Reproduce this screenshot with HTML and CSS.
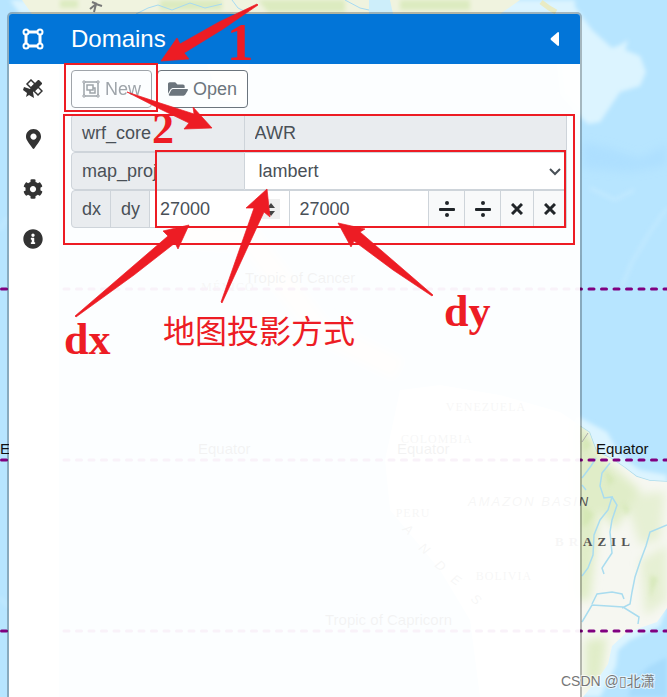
FILE: index.html
```html
<!DOCTYPE html>
<html lang="en">
<head>
<meta charset="utf-8">
<title>Domains</title>
<link rel="stylesheet" href="styles.css">
</head>
<body>
<svg class="map" viewBox="0 0 667 697" preserveAspectRatio="xMinYMin slice" aria-hidden="true">
  <defs>
    <filter id="soft" x="-20%" y="-20%" width="140%" height="140%"><feGaussianBlur stdDeviation="2"/></filter>
    <filter id="wide" x="-30%" y="-30%" width="160%" height="160%"><feGaussianBlur stdDeviation="5"/></filter>
    <clipPath id="brazil"><path d="M400 390L440 385L500 395L560 412L581 426L590 432L597 451L612 458L625 467L637 476L650 480L667 481V608L657 622L640 628L625 634L612 646L608 664L597 680L583 697H480L470 620L440 570L390 510L385 460Z"/></clipPath>
  </defs>
  <rect width="667" height="697" fill="#b7e5ff"/>
  <!-- shallow water -->
  <g fill="#dcf4ff" filter="url(#soft)">
    <path d="M550 0H570L592 30L612 48L620 45L628 40L625 50L640 56L646 72L640 86L620 92L608 110L600 122L588 124L575 112L560 95Z"/>
    <path d="M10 0L20 14H575V0Z"/>
    <path d="M575 415L590 423L607 432L620 455L640 470L667 475V486H575Z"/>
    <path d="M667 608L660 626L630 640L618 650L616 666L600 697H575V600Z"/>
  </g>
  <path d="M582 142L610 148L640 158L667 145V165L630 172L582 168Z" fill="#a8dcff" opacity=".6" filter="url(#wide)"/>
  <g fill="none" stroke="#d5f1ff" stroke-width="2" opacity=".6" filter="url(#soft)">
    <path d="M667 208L650 232L632 262L622 286M590 188L615 200L634 190M0 230L7 218M0 598L8 606"/>
  </g>
  <path d="M628 697L632 682L648 667L667 657V697Z" fill="#a8dcfc" filter="url(#soft)"/>
  <!-- northern land -->
  <path d="M22 0L32 14L80 16L150 30L205 60L220 100L245 105L250 60L280 20L320 14H500L520 0Z" fill="#f0f3df"/>
  <g fill="#dcebc0" filter="url(#soft)"><path d="M160 0H222V10H160ZM258 0H345V12H268ZM400 0H470V10H400ZM60 0H78V8H60Z"/></g>
  <path d="M369 0H390L393 14H369Z" fill="#cdeefa"/>
  <path d="M136 14L148 8L158 5L172 10L190 3L205 8L222 4M232 0L238 8L246 12M345 0L360 8L369 10" fill="none" stroke="#a7daf2"/>
  <path d="M541 2L549 8L556 12" fill="none" stroke="#e9ebc4" stroke-width="5"/>
  <path d="M90 9L96 4L102 6M96 4L94 12M92 2L97 4" stroke="#777" fill="none" stroke-width="2"/>
  <path d="M180 235L250 240L320 330L400 370" fill="none" stroke="#f4ecd0" stroke-width="25" filter="url(#wide)"/>
  <!-- southern land -->
  <g clip-path="url(#brazil)">
    <rect x="380" y="380" width="287" height="317" fill="#f6f7f1"/>
    <g fill="#e0edc8" filter="url(#wide)">
      <path d="M575 415L588 430L600 455L640 490L615 530L600 510L590 600L575 600Z"/>
      <path d="M585 640L607 637L602 676L585 690Z"/>
      <path d="M623 495L665 492L660 540L640 545ZM640 560L667 545V600L645 616Z" opacity=".7"/>
    </g>
    <g fill="#c9e3a3" filter="url(#soft)" opacity=".5">
      <path d="M582 505L594 514L588 524L582 528ZM604 468L614 480L609 486ZM623 502L630 510L625 516ZM650 575L658 578L650 600ZM582 436L592 444L584 452Z"/>
    </g>
    <g fill="none" stroke="#a9dcef" stroke-width="1.5">
      <path d="M581 426L590 432L597 451L612 458L625 467L637 476L650 480L667 481M582 478L591 466L596 458M582 485L586 490"/>
      <path d="M610 463L602 473L600 486L604 498L612 497L608 510L600 520L594 535L593 555L588 568L582 576"/>
      <path d="M612 497L617 505L612 520L610 532L612 553L606 562L602 568L604 574"/>
      <path d="M667 525L650 532L646 546L640 562L635 577L632 592L630 604L622 608M582 622L592 605L608 606L623 607L639 617L638 624"/>
      <path d="M592 604L597 594L612 592L622 594L624 599"/>
    </g>
    <path d="M582 442L588 433" stroke="#aaa"/>
  </g>
  <g class="countries" text-anchor="middle">
    <text x="228" y="291">MÉXICO</text>
    <text x="486" y="411">VENEZUELA</text>
    <text x="437" y="443">COLOMBIA</text>
    <text x="413" y="517">PERU</text>
    <text x="504" y="580">BOLIVIA</text>
  </g>
  <text class="brazil" x="555" y="546">BRAZIL</text>
  <text class="basin" x="468" y="506">AMAZON BASIN</text>
  <g class="andes"><text transform="translate(402 530) rotate(40)">A</text><text transform="translate(418 549) rotate(40)">N</text><text transform="translate(434 566) rotate(40)">D</text><text transform="translate(450 581) rotate(35)">E</text><text transform="translate(470 600) rotate(40)">S</text></g>
  <g class="parallels"><path d="M-11 289H680M-11 460H680M-11 631H680"/></g>
  <g class="map-labels">
    <text x="245" y="283">Tropic of Cancer</text>
    <text x="0" y="454">Equator</text>
    <text x="198" y="454">Equator</text>
    <text x="397" y="454">Equator</text>
    <text x="596" y="454">Equator</text>
    <text x="325" y="625">Tropic of Capricorn</text>
  </g>
</svg>

<main class="panel">
  <header class="panel-header">
    <svg class="header-icon" width="22" height="22" viewBox="0 0 22 22" fill="none" stroke="#fff" stroke-width="3"><path d="M5 4H17M5 18H17M4 5V17M18 5V17"/><g fill="#0275d8" stroke-width="2"><circle cx="4" cy="4" r="2.5"/><circle cx="18" cy="4" r="2.5"/><circle cx="4" cy="18" r="2.5"/><circle cx="18" cy="18" r="2.5"/></g></svg>
    <h1>Domains</h1>
    <button class="collapse" type="button" aria-label="Collapse"><svg width="10" height="14" viewBox="0 0 10 14"><path d="M8 0Q9 0 9 1V13Q9 14 8 14L1 8Q0 7 1 6Z" fill="#fff"/></svg></button>
  </header>
  <div class="panel-body">
    <nav class="rail">
      <button type="button" aria-label="Satellite"><svg width="20" height="20" viewBox="0 0 20 20"><g fill="none" stroke="#333" stroke-width="1.5"><path d="M8 1L12 5L8 9L4 5ZM15 8L19 12L15 16L11 12Z"/></g><path d="M15 1L16 1L19 4V5L15 9L12 12L8 8L11 5Z" fill="#333"/><path d="M1 8L7 10L9 8L12 11L10 13L11 19L6 16L3 18L4 14L0 11Z" fill="#333"/></svg></button>
      <button type="button" aria-label="Location"><svg width="15" height="20" viewBox="0 0 384 512"><path fill="#333" d="M172.268 501.67C26.97 291.031 0 269.413 0 192 0 85.961 85.961 0 192 0s192 85.961 192 192c0 77.413-26.97 99.031-172.268 309.67-9.535 13.774-29.93 13.773-39.464 0zM192 272c44.183 0 80-35.817 80-80s-35.817-80-80-80-80 35.817-80 80 35.817 80 80 80z"/></svg></button>
      <button type="button" aria-label="Settings"><svg width="20" height="20" viewBox="0 0 512 512"><path fill="#333" d="M487.4 315.7l-42.6-24.6c4.3-23.2 4.3-47 0-70.2l42.6-24.6c4.9-2.8 7.1-8.6 5.5-14-11.1-35.6-30-67.8-54.7-94.6-3.8-4.1-10-5.1-14.8-2.3L380.8 110c-17.9-15.4-38.5-27.3-60.8-35.1V25.8c0-5.6-3.9-10.5-9.4-11.7-36.7-8.2-74.3-7.8-109.2 0-5.5 1.2-9.4 6.1-9.4 11.7V75c-22.2 7.9-42.8 19.8-60.8 35.1L88.7 85.5c-4.9-2.8-11-1.9-14.8 2.3-24.7 26.7-43.6 58.9-54.7 94.6-1.7 5.4.6 11.2 5.5 14L67.3 221c-4.3 23.2-4.3 47 0 70.2l-42.6 24.6c-4.9 2.8-7.1 8.6-5.5 14 11.1 35.6 30 67.8 54.7 94.6 3.8 4.1 10 5.1 14.8 2.3l42.6-24.6c17.9 15.4 38.5 27.3 60.8 35.1v49.2c0 5.6 3.9 10.5 9.4 11.7 36.7 8.2 74.3 7.8 109.2 0 5.5-1.2 9.4-6.1 9.4-11.7v-49.2c22.2-7.9 42.8-19.8 60.8-35.1l42.6 24.6c4.9 2.8 11 1.9 14.8-2.3 24.7-26.7 43.6-58.9 54.7-94.6 1.5-5.5-.7-11.3-5.6-14.1zM256 336c-44.1 0-80-35.9-80-80s35.9-80 80-80 80 35.9 80 80-35.9 80-80 80z"/></svg></button>
      <button type="button" aria-label="Information"><svg width="20" height="20" viewBox="0 0 512 512"><path fill="#333" d="M256 8C119.043 8 8 119.083 8 256c0 136.997 111.043 248 248 248s248-111.003 248-248C504 119.083 392.957 8 256 8zm0 110c23.196 0 42 18.804 42 42s-18.804 42-42 42-42-18.804-42-42 18.804-42 42-42zm56 254c0 6.627-5.373 12-12 12h-88c-6.627 0-12-5.373-12-12v-24c0-6.627 5.373-12 12-12h12v-64h-12c-6.627 0-12-5.373-12-12v-24c0-6.627 5.373-12 12-12h64c6.627 0 12 5.373 12 12v100h12c6.627 0 12 5.373 12 12v24z"/></svg></button>
    </nav>
    <section class="content">
      <div class="toolbar">
        <button class="btn" type="button" disabled><svg width="18" height="18" viewBox="0 0 18 18" fill="none" stroke="#6c757d"><path d="M3 2H15M3 16H15M2 3V15M16 3V15" stroke-width="1.5"/><path d="M1 1H3V3H1ZM15 1H17V3H15ZM1 15H3V17H1ZM15 15H17V17H15Z"/><path d="M5 5H11V10H5ZM11 8H13V13H8V10" stroke-width="1.5"/></svg>New</button>
        <button class="btn" type="button"><svg width="20" height="18" viewBox="0 0 576 512"><path fill="#6c757d" d="M572.694 292.093L500.27 416.248A63.997 63.997 0 0 1 444.989 448H45.025c-18.523 0-30.064-20.093-20.731-36.093l72.424-124.155A64 64 0 0 1 152 256h399.964c18.523 0 30.064 20.093 20.73 36.093zM152 224h328v-48c0-26.51-21.49-48-48-48H272l-64-64H48C21.49 64 0 85.49 0 112v278.046l69.077-118.418C86.214 242.25 117.989 224 152 224z"/></svg>Open</button>
      </div>
      <form class="fields">
        <div class="row">
          <label class="addon name" for="core">wrf_core</label>
          <input class="control" id="core" type="text" value="AWR" readonly>
        </div>
        <div class="row">
          <label class="addon name" for="proj">map_proj</label>
          <div class="select">
            <select class="control" id="proj"><option>lambert</option></select>
            <svg class="chevron" width="12" height="8" viewBox="0 0 12 8" fill="none" stroke="#495057" stroke-width="2"><path d="M1 1L6 6L11 1"/></svg>
          </div>
        </div>
        <div class="row">
          <label class="addon" for="dx">dx</label>
          <label class="addon" for="dy">dy</label>
          <div class="number">
            <input class="control" id="dx" type="number" value="27000">
            <svg class="spinner" width="18" height="20" viewBox="0 0 18 20"><path d="M0 0H18V20H0Z" fill="#efefef"/><path d="M9 4L13 9H5ZM9 17L13 12H5Z" fill="#444"/></svg>
          </div>
          <div class="number"><input class="control" id="dy" type="number" value="27000"></div>
          <button class="op wide" type="button" aria-label="Divide dx"><svg width="16" height="16" viewBox="0 0 16 16" fill="#212529"><rect y="7" width="16" height="3" rx="1"/><circle cx="8" cy="2" r="2"/><circle cx="8" cy="14" r="2"/></svg></button>
          <button class="op wide" type="button" aria-label="Divide dy"><svg width="16" height="16" viewBox="0 0 16 16" fill="#212529"><rect y="7" width="16" height="3" rx="1"/><circle cx="8" cy="2" r="2"/><circle cx="8" cy="14" r="2"/></svg></button>
          <button class="op" type="button" aria-label="Multiply dx"><svg width="12" height="12" viewBox="0 0 12 12"><path d="M1 1L11 11M11 1L1 11" stroke="#212529" stroke-width="3"/></svg></button>
          <button class="op" type="button" aria-label="Multiply dy"><svg width="12" height="12" viewBox="0 0 12 12"><path d="M1 1L11 11M11 1L1 11" stroke="#212529" stroke-width="3"/></svg></button>
        </div>
      </form>
    </section>
  </div>
</main>

<svg class="notes" viewBox="0 0 667 697" preserveAspectRatio="xMinYMin slice">
  <g fill="none" stroke="#ed1c24" stroke-width="2">
    <rect x="65" y="64" width="92" height="47"/>
    <rect x="64" y="115" width="510" height="129"/>
    <rect x="156" y="151" width="409" height="76"/>
  </g>
  <g fill="#ed1c24" stroke="#ed1c24" stroke-width=".7">
    <path d="M257 4L258 5L223 29L184 53L189 59L161 61L177 38L180 44L219 22Z"/>
    <path d="M127 92L160 103L194 114L193 107L212 128L184 129L189 123L160 109Z"/>
    <path d="M75 316L168 236L163 231L189 225L178 249L175 243L134 275L76 317Z"/>
    <path d="M221 302L254 208L246 208L267 189L270 217L264 212L257 227L222 303Z"/>
    <path d="M433 295L360 232L365 229L338 223L351 247L354 241L393 270L432 296Z"/>
  </g>
  <g class="note-text">
    <text x="227" y="60" font-size="53">1</text>
    <text x="152" y="143" font-size="44">2</text>
    <text x="64" y="354" font-size="44">dx</text>
    <text x="444" y="326" font-size="44">dy</text>
    <text class="cjk" x="163" y="343" font-size="32">地图投影方式</text>
  </g>
  <text class="watermark" x="561" y="686">CSDN @▯北潇</text>
</svg>
</body>
</html>
```
FILE: styles.css
```css
* {
  box-sizing: border-box;
}

body {
  margin: 0;
  min-height: 100vh;
  overflow: hidden;
  position: relative;
  color: #495057;
  font: 18px/24px "Liberation Sans", Arial, sans-serif;
}

button,
input,
select {
  font: inherit;
  color: inherit;
  margin: 0;
}

.map,
.notes {
  position: absolute;
  inset: 0;
  width: 100%;
  height: 100%;
}

.notes {
  pointer-events: none;
}

.map-labels {
  font-size: 15px;
  fill: #111;
}

.countries,
.brazil {
  font-family: "Liberation Serif", serif;
  font-size: 12px;
  letter-spacing: 1px;
  fill: #555;
}

.brazil {
  font-size: 13px;
  font-weight: bold;
  letter-spacing: 5px;
}

.basin,
.andes {
  font-size: 13px;
  font-style: italic;
  letter-spacing: 2px;
  fill: #555;
}

.parallels {
  fill: none;
  stroke: #800080;
  stroke-width: 3;
  stroke-linecap: round;
  stroke-dasharray: 5 7.5;
}

.panel {
  position: relative;
  display: flex;
  flex-direction: column;
  height: calc(100vh - 12px);
  margin: 12px 85px 0 7px;
  border: 2px solid rgba(0, 0, 0, 0.25);
  border-bottom: 0;
  border-radius: 5px 5px 0 0;
  background-clip: padding-box;
}

.panel-header {
  display: flex;
  align-items: center;
  height: 50px;
  padding: 0 14px 0 13px;
  background: #0275d8;
  border-radius: 3px 3px 0 0;
  color: #fff;
}

h1 {
  flex: 1;
  margin: 0 0 0 27px;
  font-size: 24px;
  line-height: 32px;
  font-weight: normal;
}

.collapse {
  display: flex;
  padding: 6px;
  border: 0;
  background: none;
}

.panel-body {
  flex: 1;
  display: flex;
}

.rail {
  width: 50px;
  padding-right: 2px;
  background: #fff;
}

.rail button {
  display: grid;
  place-items: center;
  width: 100%;
  height: 50px;
  padding: 0;
  border: 0;
  background: none;
}

.content {
  flex: 1;
  min-width: 0;
  padding: 6px 13px 0 12px;
  background: rgba(255, 255, 255, 0.95);
}

.toolbar {
  display: flex;
  gap: 5px;
  margin-bottom: 6px;
}

.btn {
  display: flex;
  align-items: center;
  gap: 5px;
  height: 38px;
  padding: 0 10px;
  border: 1px solid #6c757d;
  border-radius: 4px;
  background: none;
  color: #6c757d;
}

.btn:disabled {
  opacity: 0.65;
}

.row {
  display: flex;
  height: 38px;
}

.addon {
  display: flex;
  align-items: center;
  padding: 0 9px 0 10px;
  border: 1px solid #ced4da;
  background: #e9ecef;
}

.addon:first-child {
  border-radius: 4px 0 0 4px;
}

.addon + .addon {
  margin-left: -1px;
}

.name {
  width: 35%;
}

.control {
  flex: 1;
  width: 100%;
  min-width: 0;
  height: 38px;
  padding: 0 10px;
  border: 1px solid #ced4da;
  border-left: 0;
  border-radius: 0;
  background: #fff;
  outline: 0;
}

.control[readonly] {
  background: #e9ecef;
}

.select,
.number {
  position: relative;
  display: flex;
  flex: 1;
  min-width: 0;
}

select.control {
  appearance: none;
  padding-left: 14px;
}

.chevron {
  position: absolute;
  right: 6px;
  top: 16px;
}

input[type="number"] {
  appearance: textfield;
}

.spinner {
  position: absolute;
  right: 10px;
  top: 9px;
}

.op {
  display: grid;
  place-items: center;
  width: 33px;
  padding: 0;
  border: 1px solid #ced4da;
  border-left: 0;
  background: #f8f9fa;
}

.op.wide {
  width: 36px;
}

.note-text {
  font-family: "Liberation Serif", serif;
  font-weight: bold;
  fill: #ed1c24;
}

.cjk {
  font-family: "Noto Sans CJK SC", sans-serif;
  font-weight: 400;
}

.watermark {
  font: 14px "Liberation Sans", "Noto Sans CJK SC", sans-serif;
  fill: #777;
  paint-order: stroke;
  stroke: rgba(255, 255, 255, 0.6);
  stroke-width: 2px;
}
```
